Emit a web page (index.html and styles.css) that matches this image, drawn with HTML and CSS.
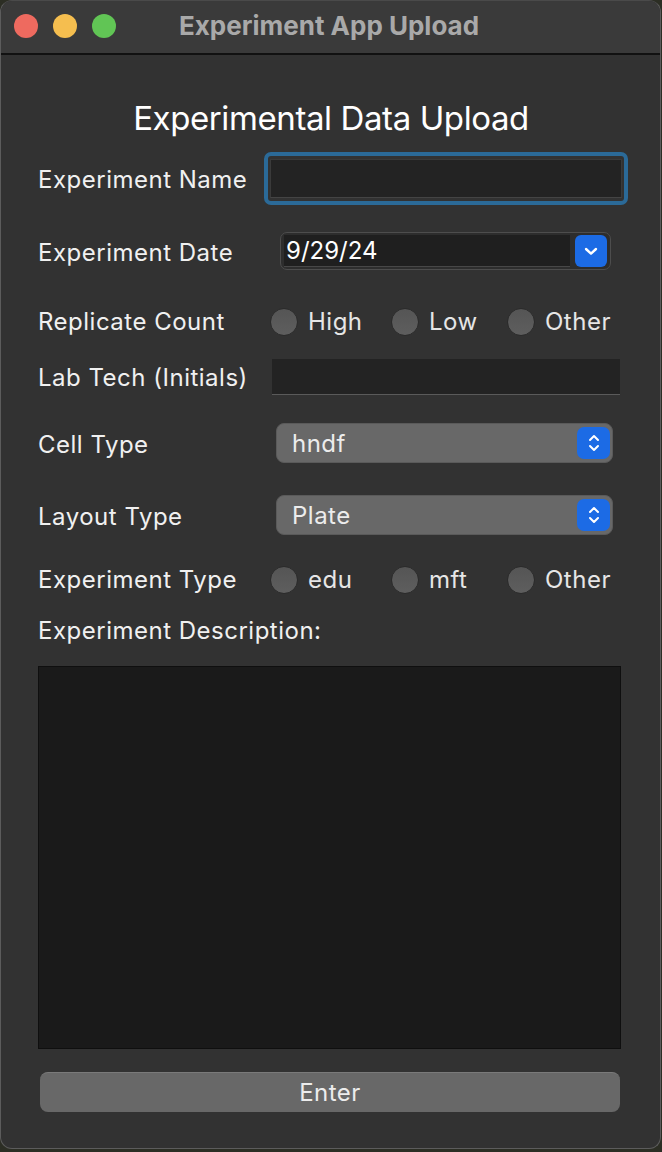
FILE: index.html
```html
<!DOCTYPE html>
<html>
<head>
<meta charset="utf-8">
<link rel="stylesheet" href="styles.css">
</head>
<body>
<div class="window">
  <div class="titlebar">
    <div class="lights">
      <span class="light red"></span>
      <span class="light yellow"></span>
      <span class="light green"></span>
    </div>
    <div class="title">Experiment App Upload</div>
  </div>
  <div class="content">
    <h1 class="heading">Experimental Data Upload</h1>

    <div class="row row-name">
      <label class="label">Experiment Name</label>
      <div class="focus-ring"><div class="field"></div></div>
    </div>

    <div class="row row-date">
      <label class="label">Experiment Date</label>
      <div class="datebox">
        <div class="datefield">9/29/24</div>
        <div class="bluebtn">
          <svg width="16" height="12" viewBox="0 0 16 12"><path d="M3 4 L8 8.6 L13 4" fill="none" stroke="#fff" stroke-width="2.4" stroke-linecap="round" stroke-linejoin="round"/></svg>
        </div>
      </div>
    </div>

    <div class="row row-radio row-rep">
      <label class="label">Replicate Count</label>
      <div class="radios">
        <span class="radio r1"><span class="dot"></span>High</span>
        <span class="radio r2"><span class="dot"></span>Low</span>
        <span class="radio r3"><span class="dot"></span>Other</span>
      </div>
    </div>

    <div class="row row-tech">
      <label class="label">Lab Tech (Initials)</label>
      <div class="plainfield"></div>
    </div>

    <div class="row row-cell">
      <label class="label">Cell Type</label>
      <div class="popup">
        <span class="popup-text">hndf</span>
        <div class="stepper">
          <svg width="14" height="22" viewBox="0 0 14 22"><path d="M3 8 L7 4 L11 8 M3 14 L7 18 L11 14" fill="none" stroke="#fff" stroke-width="2" stroke-linecap="round" stroke-linejoin="round"/></svg>
        </div>
      </div>
    </div>

    <div class="row row-layout">
      <label class="label">Layout Type</label>
      <div class="popup">
        <span class="popup-text">Plate</span>
        <div class="stepper">
          <svg width="14" height="22" viewBox="0 0 14 22"><path d="M3 8 L7 4 L11 8 M3 14 L7 18 L11 14" fill="none" stroke="#fff" stroke-width="2" stroke-linecap="round" stroke-linejoin="round"/></svg>
        </div>
      </div>
    </div>

    <div class="row row-radio row-type">
      <label class="label">Experiment Type</label>
      <div class="radios">
        <span class="radio r1"><span class="dot"></span>edu</span>
        <span class="radio r2"><span class="dot"></span>mft</span>
        <span class="radio r3"><span class="dot"></span>Other</span>
      </div>
    </div>

    <div class="desc-label label">Experiment Description:</div>
    <div class="textarea"></div>

    <button class="enter">Enter</button>
  </div>
</div>
</body>
</html>
```

FILE: styles.css
```css
* { box-sizing: border-box; }
html, body { margin: 0; padding: 0; }
body {
  width: 662px;
  height: 1152px;
  background: #2c2e24;
  font-family: "Inter", "Liberation Sans", sans-serif;
  overflow: hidden;
}
.window {
  width: 661px;
  height: 1149px;
  background: #323232;
  border-radius: 12px;
  border: 1px solid #5c5c5c;
  border-top-color: #4a4a4a;
  overflow: hidden;
  display: flex;
  flex-direction: column;
}
.titlebar {
  height: 54px;
  background: #3a3a3a;
  border-bottom: 2px solid #111;
  position: relative;
  display: flex;
  align-items: center;
  justify-content: center;
  flex-shrink: 0;
}
.lights {
  position: absolute;
  left: 13px;
  top: 13px;
  display: flex;
  gap: 15px;
}
.light {
  width: 24px;
  height: 24px;
  border-radius: 50%;
  display: block;
}
.red { background: #ee6a5f; }
.yellow { background: #f5be4f; }
.green { background: #61c555; }
.title {
  color: #a9a9a9;
  font-weight: 700;
  font-size: 26px;
  margin-left: -3px;
  margin-top: -4px;
}
.content {
  flex: 1;
  padding: 0 30px 0 37px;
  display: flex;
  flex-direction: column;
}
.heading {
  margin: 43px 0 0 0;
  text-align: center;
  color: #ffffff;
  font-weight: 400;
  font-size: 33px;
  line-height: 40px;
  letter-spacing: -0.4px;
  padding-right: 6px;
}
.label {
  color: #f0f0f0;
  font-size: 24px;
  letter-spacing: 0.5px;
  line-height: 28px;
  white-space: nowrap;
}
.row {
  display: flex;
  align-items: center;
}
.row > * { flex-shrink: 0; }
.row > .label {
  flex: 0 0 226px;
}
.row-name { margin-top: 14px; height: 53px; }
.row-name .label { margin-top: 3px; }
.focus-ring {
  width: 364px;
  height: 53px;
  border: 4.5px solid #2b6a98;
  border-radius: 7px;
  padding: 3px 2px;
}
.field {
  width: 100%;
  height: 100%;
  background: #232323;
  border: 1px solid #3a3a3a;
  border-bottom-color: #444;
}
.row-date { margin-top: 27px; height: 38px; }
.row-date .label { margin-top: 4px; }
.datebox {
  margin-left: 16px;
  width: 331px;
  height: 38px;
  border: 1px solid #4d4d4d;
  border-radius: 7px;
  background: #2d2d2d;
  display: flex;
  align-items: center;
  padding: 0 3px 0 3px;
}
.datefield {
  width: 287px;
  height: 32px;
  background: #1f1f1f;
  border-bottom: 1px solid #474747;
  color: #ffffff;
  font-size: 24px;
  line-height: 32px;
  padding-left: 2px;
}
.bluebtn {
  margin-left: 5px;
  width: 32px;
  height: 32px;
  border-radius: 6px;
  background: #1c6be5;
  display: flex;
  align-items: center;
  justify-content: center;
}
.row-rep { margin-top: 38px; height: 28px; }
.radios {
  position: relative;
  flex: 1;
  height: 28px;
}
.radio {
  position: absolute;
  top: 0;
  display: flex;
  align-items: center;
  gap: 10px;
  color: #e6e6e6;
  font-size: 24px;
  letter-spacing: 0.5px;
  line-height: 28px;
}
.dot {
  width: 28px;
  height: 28px;
  border-radius: 50%;
  background: linear-gradient(#555555, #5e5e5e);
  border: 1px solid #2b2b2b;
  display: block;
}
.radio.r1 { left: 6px; }
.radio.r2 { left: 127px; }
.radio.r3 { left: 243px; }
.row-tech { margin-top: 23px; height: 36px; }
.row-tech .label { margin-top: 2px; }
.plainfield {
  margin-left: 8px;
  width: 348px;
  height: 36px;
  background: #232323;
  border-bottom: 1px solid #5a5a5a;
}
.row-cell { margin-top: 28px; height: 40px; }
.row-layout { margin-top: 32px; height: 40px; }
.row-cell .label, .row-layout .label { margin-top: 4px; }
.popup {
  margin-left: 12px;
  width: 337px;
  height: 40px;
  background: #686868;
  border-radius: 8px;
  border: 1px solid #5a5a5a;
  display: flex;
  align-items: center;
  justify-content: space-between;
  padding: 0 2px 0 15px;
}
.popup-text {
  color: #ececec;
  font-size: 24px;
  letter-spacing: 0.5px;
}
.stepper {
  width: 33px;
  height: 32px;
  border-radius: 7px;
  background: #1c6be5;
  display: flex;
  align-items: center;
  justify-content: center;
}
.row-type { margin-top: 31px; height: 28px; }
.desc-label { margin-top: 23px; }
.textarea {
  margin-top: 21px;
  width: 583px;
  height: 383px;
  background: #1a1a1a;
  border: 1px solid #0f0f0f;
}
.enter {
  margin: 23px 0 0 2px;
  width: 580px;
  height: 40px;
  background: #686868;
  border: none;
  border-top: 1px solid #7a7a7a;
  border-radius: 8px;
  color: #ececec;
  font-family: inherit;
  font-size: 24px;
  letter-spacing: 0.5px;
  padding: 0;
}
```
